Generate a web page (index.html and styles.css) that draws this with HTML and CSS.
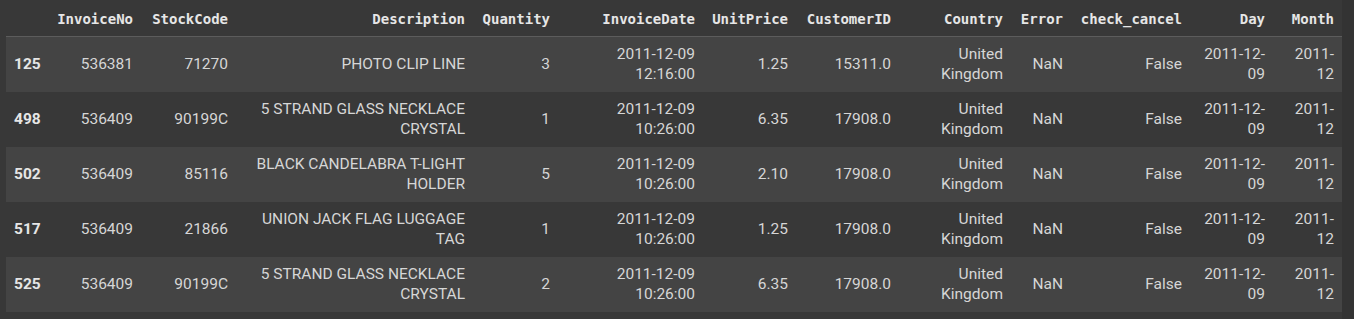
FILE: index.html
```html
<!DOCTYPE html>
<html>
<head>
<meta charset="utf-8">
<link rel="stylesheet" href="styles.css">
</head>
<body>
<div class="output">
<div class="frame">
<table class="dataframe">
<colgroup>
<col class="c-idx"><col class="c-inv"><col class="c-stock"><col class="c-desc"><col class="c-qty"><col class="c-date"><col class="c-price"><col class="c-cust"><col class="c-country"><col class="c-err"><col class="c-check"><col class="c-day"><col class="c-month">
</colgroup>
<thead>
<tr>
<th></th><th>InvoiceNo</th><th>StockCode</th><th>Description</th><th>Quantity</th><th>InvoiceDate</th><th>UnitPrice</th><th>CustomerID</th><th>Country</th><th>Error</th><th>check_cancel</th><th>Day</th><th>Month</th>
</tr>
</thead>
<tbody>
<tr class="odd">
<th>125</th><td>536381</td><td>71270</td><td>PHOTO CLIP LINE</td><td>3</td><td>2011-12-09 12:16:00</td><td>1.25</td><td>15311.0</td><td>United Kingdom</td><td>NaN</td><td>False</td><td>2011-12-<wbr>09</td><td>2011-<wbr>12</td>
</tr>
<tr>
<th>498</th><td>536409</td><td>90199C</td><td>5 STRAND GLASS NECKLACE CRYSTAL</td><td>1</td><td>2011-12-09 10:26:00</td><td>6.35</td><td>17908.0</td><td>United Kingdom</td><td>NaN</td><td>False</td><td>2011-12-<wbr>09</td><td>2011-<wbr>12</td>
</tr>
<tr class="odd">
<th>502</th><td>536409</td><td>85116</td><td>BLACK CANDELABRA T-LIGHT HOLDER</td><td>5</td><td>2011-12-09 10:26:00</td><td>2.10</td><td>17908.0</td><td>United Kingdom</td><td>NaN</td><td>False</td><td>2011-12-<wbr>09</td><td>2011-<wbr>12</td>
</tr>
<tr>
<th>517</th><td>536409</td><td>21866</td><td>UNION JACK FLAG LUGGAGE TAG</td><td>1</td><td>2011-12-09 10:26:00</td><td>1.25</td><td>17908.0</td><td>United Kingdom</td><td>NaN</td><td>False</td><td>2011-12-<wbr>09</td><td>2011-<wbr>12</td>
</tr>
<tr class="odd">
<th>525</th><td>536409</td><td>90199C</td><td>5 STRAND GLASS NECKLACE CRYSTAL</td><td>2</td><td>2011-12-09 10:26:00</td><td>6.35</td><td>17908.0</td><td>United Kingdom</td><td>NaN</td><td>False</td><td>2011-12-<wbr>09</td><td>2011-<wbr>12</td>
</tr>
</tbody>
</table>
</div>
<div class="rail"></div>
</div>
</body>
</html>
```
FILE: styles.css
```css
html, body {
  margin: 0;
  padding: 0;
  background: #383838;
}
body {
  width: 1354px;
  height: 319px;
  overflow: hidden;
}
.output {
  display: flex;
  height: 319px;
}
.frame {
  padding-left: 6px;
  width: 1336px;
}
.rail {
  flex: 1;
  background: #333333;
}
.dataframe {
  table-layout: fixed;
  width: 1336px;
  border-collapse: separate;
  border-spacing: 0;
  font-family: Roboto, "Liberation Sans", sans-serif;
  font-size: 15.5px;
  line-height: 19.5px;
  color: #d6d6d6;
}
.c-idx { width: 43px; }
.c-inv { width: 92px; }
.c-stock { width: 95px; }
.c-desc { width: 237px; }
.c-qty { width: 85px; }
.c-date { width: 145px; }
.c-price { width: 93px; }
.c-cust { width: 103px; }
.c-country { width: 112px; }
.c-err { width: 60px; }
.c-check { width: 119px; }
.c-day { width: 83px; }
.c-month { width: 69px; }

.dataframe thead tr {
  height: 37px;
}
.dataframe thead th {
  box-sizing: border-box;
  height: 37px;
  padding: 1px 8px 0;
  text-align: right;
  vertical-align: middle;
  font-family: "DejaVu Sans Mono", "Liberation Mono", monospace;
  font-weight: bold;
  font-size: 14px;
  line-height: 18px;
  color: #e6e6e6;
  border-bottom: 1px solid #5c5c5c;
  white-space: nowrap;
}
.dataframe tbody tr {
  height: 55px;
}
.dataframe tbody tr.odd {
  background: #444444;
}
.dataframe tbody th {
  box-sizing: border-box;
  height: 55px;
  padding: 0 8px;
  text-align: left;
  font-weight: bold;
  color: #e6e6e6;
  vertical-align: middle;
}
.dataframe td {
  box-sizing: border-box;
  height: 55px;
  padding: 0 8px;
  text-align: right;
  vertical-align: middle;
}
```
